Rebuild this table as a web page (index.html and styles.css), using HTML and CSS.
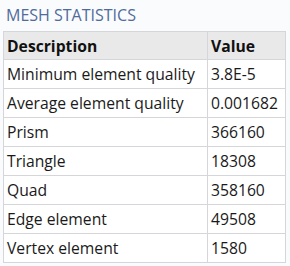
FILE: index.html
```html
<!DOCTYPE html>
<html>
<head>
<meta charset="utf-8">
<link rel="stylesheet" href="styles.css">
</head>
<body>
<div class="panel">
  <div class="title">MESH STATISTICS</div>
  <table class="stats">
    <thead>
      <tr><th class="c1">Description</th><th class="c2">Value</th></tr>
    </thead>
    <tbody>
      <tr><td>Minimum element quality</td><td>3.8E-5</td></tr>
      <tr><td>Average element quality</td><td>0.001682</td></tr>
      <tr><td>Prism</td><td>366160</td></tr>
      <tr><td>Triangle</td><td>18308</td></tr>
      <tr><td>Quad</td><td>358160</td></tr>
      <tr><td>Edge element</td><td>49508</td></tr>
      <tr><td>Vertex element</td><td>1580</td></tr>
    </tbody>
  </table>
</div>
</body>
</html>
```
FILE: styles.css
```css
html, body {
  margin: 0;
  padding: 0;
  background: #fafbfd;
}
.panel {
  padding: 5px 4px 0 3px;
  font-family: "Open Sans", "Noto Sans", sans-serif;
}
.title {
  color: #4f6b9c;
  font-size: 16px;
  line-height: 21px;
  padding-left: 3px;
  margin-bottom: 5px;
}
.stats {
  border-collapse: collapse;
  width: 283px;
  font-size: 15.7px;
  color: #1a1a1a;
  background: #ffffff;
}
.stats th, .stats td {
  border: 1px solid #d4d6da;
  text-align: left;
  padding: 0 3px;
  white-space: nowrap;
}
.stats th {
  background: #e9e9e9;
  font-weight: 700;
  height: 27px;
  color: #111;
}
.stats td {
  height: 28px;
}
.stats .c1 {
  width: 197px;
}
```
